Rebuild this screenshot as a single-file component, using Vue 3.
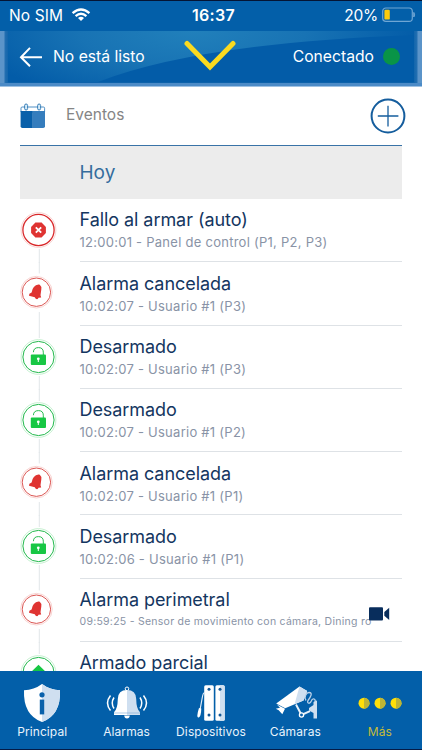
<script setup>
import { ref } from 'vue'

const events = ref([
  { title: 'Fallo al armar (auto)', detail: '12:00:01 - Panel de control (P1, P2, P3)', type: 'error' },
  { title: 'Alarma cancelada', detail: '10:02:07 - Usuario #1 (P3)', type: 'alarm' },
  { title: 'Desarmado', detail: '10:02:07 - Usuario #1 (P3)', type: 'unlock' },
  { title: 'Desarmado', detail: '10:02:07 - Usuario #1 (P2)', type: 'unlock' },
  { title: 'Alarma cancelada', detail: '10:02:07 - Usuario #1 (P1)', type: 'alarm' },
  { title: 'Desarmado', detail: '10:02:06 - Usuario #1 (P1)', type: 'unlock' },
  { title: 'Alarma perimetral', detail: '09:59:25 - Sensor de movimiento con cámara, Dining ro', type: 'alarm', video: true },
  { title: 'Armado parcial', detail: '', type: 'partial' }
])

const tabs = [
  { id: 'home', label: 'Principal' },
  { id: 'alarms', label: 'Alarmas' },
  { id: 'devices', label: 'Dispositivos' },
  { id: 'cameras', label: 'Cámaras' },
  { id: 'more', label: 'Más' }
]

const activeTab = ref('more')
</script>

<template>
  <div class="app">
    <div class="status-bar">
      <div class="carrier">
        <span class="sim">No SIM</span>
        <svg width="20" height="14" viewBox="0 0 20 14" fill="none" stroke="#fff" stroke-width="2.4">
          <path d="M1.6 5.1Q10-2.2 18.4 5.1" />
          <path d="M4.6 8.2Q10 3.5 15.4 8.2" />
          <path d="M7 9.9Q10 7.4 13 9.9L10 13Z" fill="#fff" stroke="none" />
        </svg>
      </div>
      <span class="time">16:37</span>
      <div class="battery">
        <span class="percent">20%</span>
        <svg width="34" height="16" viewBox="0 0 34 16">
          <rect x=".7" y="1" width="29.6" height="13.4" rx="3.2" fill="none" stroke="#6fa6d4" stroke-width="1.2" />
          <rect x="2.4" y="2.8" width="5.4" height="9.8" rx="1.2" fill="#fecb0b" />
          <path d="M31.8 5.4Q33.4 7.7 31.8 10Z" fill="#8bb8df" stroke="#6fa6d4" />
        </svg>
      </div>
    </div>

    <header class="header">
      <div class="header-panel">
        <svg class="swoosh" width="406" height="51" viewBox="0 0 406 51">
          <defs>
            <radialGradient id="swooshFill" gradientUnits="userSpaceOnUse" cx="0" cy="0" r="1" gradientTransform="translate(185 0) scale(225 75)">
              <stop offset="0" stop-color="#2180bb" />
              <stop offset=".5" stop-color="#1873b4" />
              <stop offset="1" stop-color="#035ca8" />
            </radialGradient>
          </defs>
          <path d="M0 0H406V4Q190 12 90 51H0Z" fill="url(#swooshFill)" />
        </svg>
        <svg class="back" width="24" height="20" viewBox="0 0 24 20" fill="none" stroke="#fff" stroke-width="2">
          <path d="M23 10.2H2M11 .9L2 10.2L11 19.3" />
        </svg>
        <span class="state">No está listo</span>
        <svg class="chevron" width="54" height="34" viewBox="0 0 54 34" fill="none">
          <path d="M4 3.5L27 27L50 3.5" stroke="#fada20" stroke-width="5" stroke-linecap="round" />
        </svg>
        <span class="connection">Conectado</span>
        <span class="dot"></span>
      </div>
    </header>

    <main class="content">
      <div class="section-head">
        <svg class="calendar" width="26" height="26" viewBox="0 0 26 26">
          <path d="M1 9V5.2Q1 4 2.2 4H23.4Q24.6 4 24.6 5.2V9Z" fill="#fff" stroke="#4f8fc5" stroke-width="1" />
          <path d="M.6 8H12.8V25H2.4Q.6 25 .6 23.2Z" fill="#0960aa" />
          <path d="M12.8 8H25V23.2Q25 25 23.2 25H12.8Z" fill="#357dbd" />
          <rect x="4.6" y="1" width="3" height="6" rx="1.5" fill="#d6ebf8" stroke="#397fb8" />
          <rect x="17.6" y="1" width="3" height="6" rx="1.5" fill="#d6ebf8" stroke="#397fb8" />
        </svg>
        <h2>Eventos</h2>
        <svg class="add" width="36" height="36" viewBox="0 0 36 36" fill="none">
          <circle cx="18" cy="18" r="16.4" stroke="#155d9d" stroke-width="2" />
          <path d="M18 7.8V28.4M7.8 18H28.4" stroke="#155d9d" stroke-width="1.3" />
        </svg>
      </div>

      <div class="day">Hoy</div>

      <div class="events">
        <div v-for="(item, index) in events" :key="index" class="event">
          <svg class="marker" width="40" height="64" viewBox="0 0 40 64">
            <path v-if="index > 0" d="M19.3 0V12" stroke="#e2e6e9" />
            <path d="M19.3 50V64" stroke="#e2e6e9" />

            <g v-if="item.type === 'error'">
              <circle cx="18.5" cy="31" r="17.4" fill="#fff" stroke="#f9d3d1" />
              <circle cx="18.5" cy="31" r="15.6" fill="none" stroke="#d9292b" stroke-width="1.3" />
              <path d="M15.4 23.6H21.6L25.9 27.9V34.1L21.6 38.4H15.4L11.1 34.1V27.9Z" fill="#df3432" />
              <path d="M15.8 28.3L21.2 33.7M21.2 28.3L15.8 33.7" stroke="#fff" stroke-width="1.8" />
            </g>

            <g v-else-if="item.type === 'alarm'">
              <circle cx="16.4" cy="30.2" r="19" fill="#fff" />
              <circle cx="16.4" cy="30.2" r="15.8" fill="#fff" stroke="#f9d3d1" />
              <circle cx="16.4" cy="30.2" r="14.2" fill="none" stroke="#db5653" />
              <path d="M18.5 22.4Q20 22.2 20.3 23.6Q22 24.8 21.3 27.6L20.5 33.2L21.2 35.5L18.5 35.8Q17.8 38 15.5 36.6L14.8 35.3L9 33.7L9.4 31.8L11.6 30.4Q12.7 23.2 18.5 22.4Z" fill="#df3432" />
            </g>

            <g v-else>
              <circle cx="18.5" cy="31" r="17.4" fill="#fff" stroke="#c8f1d2" />
              <circle cx="18.5" cy="31" r="15.6" fill="none" stroke="#22b94c" />
              <template v-if="item.type === 'unlock'">
                <path d="M13.4 26.2Q13.6 21.6 18.4 21.6Q23.3 21.6 23.3 26.2V29" fill="none" stroke="#28bc50" />
                <rect x="10.8" y="28.6" width="15.2" height="10.4" rx="1" fill="#17c744" />
                <circle cx="18.3" cy="32.8" r="1.4" fill="#fff" />
                <path d="M18.3 33V36" stroke="#fff" />
              </template>
              <path v-else d="M18.5 22.8L28 32H24V40H13V32H9Z" fill="#17c744" />
            </g>
          </svg>

          <div class="event-body">
            <h3>{{ item.title }}</h3>
            <p :class="{ small: item.video }">{{ item.detail }}</p>
            <svg v-if="item.video" class="video" width="21" height="14" viewBox="0 0 21 14" fill="#082d5c">
              <rect x="0" y=".2" width="14" height="13.3" rx="1" />
              <path d="M20.2 .8V13L15.3 8.8V5Z" />
            </svg>
          </div>
        </div>
      </div>
    </main>

    <nav class="tab-bar">
      <button
        v-for="tab in tabs"
        :key="tab.id"
        :class="['tab', tab.id, { active: activeTab === tab.id }]"
        @click="activeTab = tab.id"
      >
        <svg v-if="tab.id === 'home'" width="46" height="40" viewBox="0 0 46 40">
          <path d="M23 1Q31 7 41 7.2Q42 32 23 39Q4 32 5 7.2Q15 7 23 1Z" fill="#fff" />
          <path d="M23 1Q31 7 41 7.2Q42 32 23 39Z" fill="#cfdff0" />
          <circle cx="23" cy="11.8" r="2.6" fill="#0961ab" />
          <path d="M20.8 16.6H25.2V31.4H20.8Z" fill="#0961ab" />
        </svg>

        <svg v-else-if="tab.id === 'alarms'" width="46" height="40" viewBox="0 0 46 40">
          <circle cx="23" cy="5.8" r="1.8" fill="none" stroke="#fff" />
          <path d="M23 7Q14 7 13.8 16Q13.6 26.2 10 29.2V32H23Z" fill="#fff" />
          <path d="M23 7Q32 7 32.2 16Q32.4 26.2 36 29.2V32H23Z" fill="#cfdff0" />
          <path d="M10 30H36" stroke="#7aa9d4" stroke-width=".6" />
          <path d="M20.2 32.6H25.8Q25.5 35.6 23 35.6Q20.5 35.6 20.2 32.6Z" fill="#fff" />
          <g fill="none" stroke="#fff" stroke-width="1.5">
            <path d="M6.5 12.5Q.5 20 6.5 27.5M10 14.5Q6.5 20 10 25.5" />
            <path d="M39.5 12.5Q45.5 20 39.5 27.5M36 14.5Q39.5 20 36 25.5" />
          </g>
        </svg>

        <svg v-else-if="tab.id === 'devices'" width="46" height="40" viewBox="0 0 46 40">
          <rect x="16.2" y="2.2" width="9.6" height="35.6" rx="1.5" fill="#fff" />
          <rect x="27.4" y="2.2" width="9.3" height="35.6" rx="1.5" fill="#fff" />
          <path d="M32 2.2H35.2Q36.7 2.2 36.7 3.7V36.3Q36.7 37.8 35.2 37.8H32Z" fill="#cfdff0" />
          <g fill="#125896">
            <circle cx="21" cy="6.3" r="1.5" />
            <circle cx="21" cy="32" r="1.5" />
            <circle cx="32" cy="6.3" r="1.5" />
            <circle cx="32" cy="32" r="1.5" />
          </g>
          <path d="M16.8 9.5Q15 9.5 14.2 15L12 27" fill="none" stroke="#e4eef8" stroke-width="1.2" />
          <path d="M11 25L13.3 25.5Q13.2 33 10.8 34.5Q9.3 35 9.3 32.5Q9.4 30 11 25Z" fill="#fff" />
        </svg>

        <svg v-else-if="tab.id === 'cameras'" width="46" height="40" viewBox="0 0 46 40">
          <path d="M4.2 20.5L27.5 3.5L35.2 8L31.5 17.5L13.2 25.2Z" fill="#fff" />
          <path d="M27.5 3.5L35.2 8L31.5 17.5L22.5 21.3Z" fill="#cfdff0" />
          <path d="M4.8 21.5L13 25.8L10.3 31.2L6.7 27.2L3.8 25.8L8 24.8Z" fill="#fff" />
          <path d="M24 21.5L29.5 32L38 28.2" fill="none" stroke="#e7f0f9" stroke-width="2" />
          <circle cx="29.5" cy="32" r="2.1" fill="#0961ab" stroke="#fff" stroke-width="1.3" />
          <path d="M34 17.5C31.5 14 34.5 9.5 37 9.5C41.5 9.5 38 15 36 17.5C34.5 20.5 38 21.5 39.3 18C40.5 14.5 44.5 15.5 42.8 20" fill="none" stroke="#b9d0e8" stroke-width="1.3" />
          <path d="M45 17.5V35.5H41.5V30L37 27.5V25L41.5 22V19Z" fill="#cfdff0" />
        </svg>

        <svg v-else width="46" height="40" viewBox="0 0 46 40">
          <g v-for="x in [7, 23, 39]" :key="x">
            <circle :cx="x" cy="20.2" r="5.5" fill="#ffdf08" />
            <path :d="`M${x} 14.7A5.5 5.5 0 0 1 ${x} 25.7Z`" fill="#bdb436" />
          </g>
        </svg>
        <span>{{ tab.label }}</span>
      </button>
    </nav>
  </div>
</template>

<style>
body {
  margin: 0;
  background: #fff;
}
</style>

<style scoped>
.app {
  width: 422px;
  height: 750px;
  box-sizing: border-box;
  display: flex;
  flex-direction: column;
  overflow: hidden;
  background: #fff;
  font-family: Inter, Roboto, sans-serif;
}

svg {
  display: block;
  flex-shrink: 0;
}

.status-bar {
  height: 31px;
  flex-shrink: 0;
  box-sizing: border-box;
  border-top: 1px solid #041434;
  background: #035fa9;
  color: #fff;
  display: grid;
  grid-template-columns: 1fr auto 1fr;
  align-items: center;
  padding: 0 6px 2px 9px;
  font-size: 15.5px;
}

.carrier,
.battery {
  display: flex;
  align-items: center;
}

.carrier {
  gap: 8px;
}

.battery {
  justify-content: flex-end;
  gap: 4px;
}

.sim {
  letter-spacing: 0.1px;
}

.time {
  padding-left: 2px;
  font-size: 16px;
  font-weight: 600;
  letter-spacing: 0.3px;
}

.percent {
  font-size: 15.5px;
  letter-spacing: -0.2px;
}

.header {
  height: 56px;
  flex-shrink: 0;
  box-sizing: border-box;
  padding: 0 8px 5px;
  background: linear-gradient(90deg, #5b94c9 0, #5b94c9 4px, #236fb1 5px, #0c62aa 9px, #0c62aa 413px, #236fb1 417px, #5b94c9 418px);
  border-bottom: 1px solid #9fc2e3;
  box-shadow: inset 0 -3px 0 #4c8bc7;
}

.header-panel {
  height: 51px;
  position: relative;
  display: flex;
  align-items: center;
  padding: 0 14px 0 11px;
  background: #035ca8;
  color: #fff;
  font-size: 15.7px;
}

.swoosh {
  position: absolute;
  left: 0;
  top: 0;
}

.back,
.state,
.connection,
.dot {
  position: relative;
}

.state {
  margin-left: 10px;
}

.chevron {
  position: absolute;
  left: 175px;
  top: 9px;
}

.connection {
  margin-left: auto;
}

.dot {
  width: 17px;
  height: 17px;
  margin-left: 9px;
  border-radius: 50%;
  background: #099447;
}

.content {
  flex: 1;
  min-height: 0;
  overflow: hidden;
  padding: 0 20px;
}

.section-head {
  height: 58px;
  display: flex;
  align-items: center;
  margin-right: -4px;
}

.calendar {
  margin-top: -1px;
}

h2 {
  margin: 0 auto 3px 20px;
  font-size: 15.5px;
  font-weight: 400;
  color: #858585;
}

.day {
  height: 53px;
  border-top: 1px solid #3973a7;
  background: #ececec;
  padding-left: 59.5px;
  line-height: 53px;
  font-size: 19px;
  color: #356c9d;
}

.event {
  height: 63.3px;
  display: flex;
}

.marker {
  margin-right: 19.5px;
}

.event-body {
  flex: 1;
  position: relative;
  box-sizing: border-box;
  border-bottom: 1px solid #dee2e6;
  padding-top: 9.4px;
  white-space: nowrap;
}

h3 {
  margin: 0;
  font-size: 18px;
  line-height: 24px;
  font-weight: 400;
  letter-spacing: -0.06px;
  color: #14365f;
}

p {
  margin: 0;
  font-size: 13px;
  line-height: 20px;
  letter-spacing: 0.26px;
  color: #8993a6;
}

p.small {
  font-size: 10.5px;
}

.video {
  position: absolute;
  left: 289.5px;
  top: 28px;
}

.tab-bar {
  height: 79px;
  flex-shrink: 0;
  box-sizing: border-box;
  display: grid;
  grid-template-columns: repeat(5, 1fr);
  background: #035fa9;
  border-bottom: 1px solid #041b46;
}

.tab {
  border: 0;
  padding: 12px 0 0;
  background: none;
  display: flex;
  flex-direction: column;
  align-items: center;
  color: #e9f3fc;
  font-family: inherit;
  font-size: 12px;
  letter-spacing: 0.1px;
  white-space: nowrap;
  cursor: pointer;
}

.tab span {
  line-height: 16px;
  margin-top: 1px;
}

.tab.active {
  color: #c5bb3a;
}
</style>
